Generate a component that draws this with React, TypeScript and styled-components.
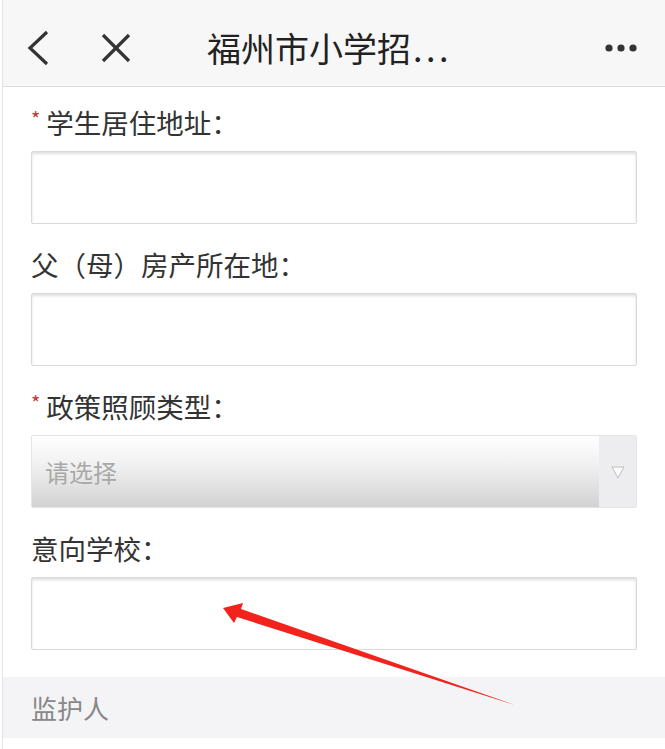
import React from "react";
import styled, { createGlobalStyle } from "styled-components";

const Global = createGlobalStyle`
  html, body { margin: 0; padding: 0; background: #fff; }
  body { font-family: "Noto Sans CJK SC", "Noto Sans", sans-serif; }
`;

const Page = styled.div`
  position: relative;
  height: 749px;
  overflow: hidden;
  background: #fff;
  box-sizing: border-box;
  border-left: 1px solid #e4e4e4;
  margin-left: 2px;
  width: 663px;
`;

const NavBar = styled.div`
  height: 87px;
  box-sizing: border-box;
  background: #f7f7f7;
  border-bottom: 1px solid #dcdcdc;
  display: flex;
  align-items: center;
  padding: 9px 26px 0 24px;
`;

const IconBtn = styled.div<{ $w: number }>`
  width: ${(p) => p.$w}px;
  height: 40px;
  display: flex;
  align-items: center;
  color: #333;
`;

const Title = styled.div`
  flex: 1;
  font-size: 34px;
  color: #222;
  padding-left: 76px;
  white-space: nowrap;
  line-height: 40px;
`;

const Dots = styled.span`
  letter-spacing: 3.5px;
  margin-left: 2px;
`;

const Form = styled.div`
  padding: 15px 28px 0 28px;
  display: flex;
  flex-direction: column;
`;

const Field = styled.div`
  display: flex;
  flex-direction: column;
  & + & {
    margin-top: 20px;
  }
`;

const Label = styled.div`
  font-size: 27.5px;
  line-height: 40px;
  color: #333;
  margin-bottom: 9px;
  display: flex;
  align-items: center;
`;

const Star = styled.span`
  color: #b8393a;
  font-size: 20px;
  margin-right: 6px;
  position: relative;
  top: -3px;
`;

const Input = styled.div`
  height: 73px;
  box-sizing: border-box;
  border: 1px solid #dadada;
  border-radius: 2px;
  background: #fff;
  box-shadow: inset 0 2px 3px rgba(0, 0, 0, 0.13);
`;

const Select = styled.div`
  height: 73px;
  box-sizing: border-box;
  border: 1px solid #e4e4e4;
  border-radius: 2px;
  display: flex;
  overflow: hidden;
`;

const SelectText = styled.div`
  flex: 1;
  display: flex;
  align-items: center;
  padding-left: 13px;
  font-size: 24px;
  color: #a8a8a8;
  background: linear-gradient(#ffffff 0%, #f1f1f1 40%, #d2d2d2 100%);
`;

const SelectArrow = styled.div`
  width: 37px;
  background: #ededf0;
  display: flex;
  align-items: center;
  justify-content: center;
`;

const Section = styled.div`
  margin-top: 27px;
  height: 61px;
  background: #f4f4f6;
  display: flex;
  align-items: center;
  padding-left: 28px;
  font-size: 26px;
  color: #888;
`;

const ArrowOverlay = styled.svg`
  position: absolute;
  left: -3px;
  top: 0;
  pointer-events: none;
`;

export default function App() {
  return (
    <>
      <Global />
      <Page>
        <NavBar>
          <IconBtn $w={74}>
            <svg width="24" height="36" viewBox="0 0 24 36">
              <polyline points="20,2 3,18 20,34" fill="none" stroke="#333" strokeWidth="3.2" />
            </svg>
          </IconBtn>
          <IconBtn $w={30}>
            <svg width="30" height="30" viewBox="0 0 30 30">
              <line x1="2" y1="2" x2="28" y2="28" stroke="#333" strokeWidth="3.2" />
              <line x1="28" y1="2" x2="2" y2="28" stroke="#333" strokeWidth="3.2" />
            </svg>
          </IconBtn>
          <Title>
            福州市小学招<Dots>...</Dots>
          </Title>
          <IconBtn $w={34}>
            <svg width="34" height="10" viewBox="0 0 34 10">
              <circle cx="4" cy="5" r="3.6" fill="#333" />
              <circle cx="16" cy="5" r="3.6" fill="#333" />
              <circle cx="28" cy="5" r="3.6" fill="#333" />
            </svg>
          </IconBtn>
        </NavBar>
        <Form>
          <Field>
            <Label>
              <Star>*</Star>学生居住地址：
            </Label>
            <Input />
          </Field>
          <Field>
            <Label>父（母）房产所在地：</Label>
            <Input />
          </Field>
          <Field>
            <Label>
              <Star>*</Star>政策照顾类型：
            </Label>
            <Select>
              <SelectText>请选择</SelectText>
              <SelectArrow>
                <svg width="14" height="14" viewBox="0 0 14 14">
                  <polygon points="1,2 13,2 7,13" fill="#fbfbfb" stroke="#bdbdbd" strokeWidth="1" />
                </svg>
              </SelectArrow>
            </Select>
          </Field>
          <Field>
            <Label>意向学校：</Label>
            <Input />
          </Field>
        </Form>
        <Section>监护人</Section>
        <ArrowOverlay width="665" height="749" viewBox="0 0 665 749">
          <polygon
            points="223,608 243,603 241,609 515,705 237,617 234,623"
            fill="#f2231c"
          />
        </ArrowOverlay>
      </Page>
    </>
  );
}
